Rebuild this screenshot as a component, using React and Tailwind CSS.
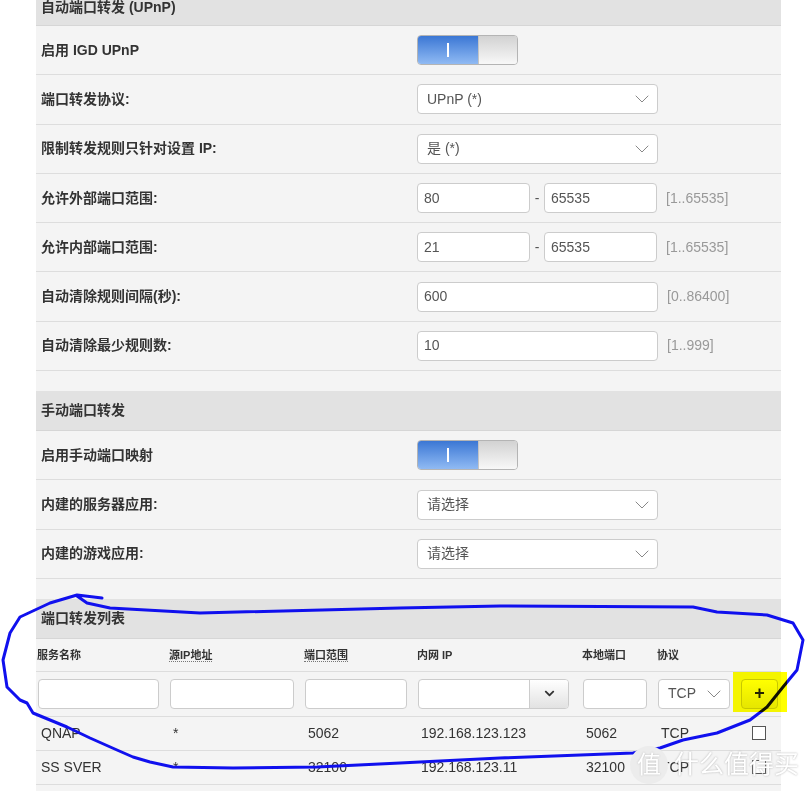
import React from 'react';
import { ChevronDown } from 'lucide-react';
import { FaChevronDown } from 'react-icons/fa';

const font = { fontFamily: '"Liberation Sans", "Noto Sans CJK SC", sans-serif' };

function Toggle() {
  return (
    <div className="flex h-[30px] w-[101px] overflow-hidden rounded-[4px] border border-[#b4b4b4]">
      <div className="flex w-[60px] items-center justify-center bg-gradient-to-b from-[#3b77d4] to-[#90baf3]">
        <div className="h-[14px] w-[2px] bg-white" />
      </div>
      <div className="flex-1 border-l border-[#c4c4c4] bg-gradient-to-b from-[#d2d2d2] to-[#f8f8f8]" />
    </div>
  );
}

function Select({ value, w = 'w-[241px]' }) {
  return (
    <div className={`flex h-[30px] ${w} items-center justify-between rounded-[4px] border border-[#cccccc] bg-white pl-[9px] pr-[3px] text-[14px] text-[#555]`}>
      <span>{value}</span>
      <ChevronDown size={24} strokeWidth={1} color="#888" />
    </div>
  );
}

function Input({ value, w = 'w-[241px]' }) {
  return (
    <div className={`flex h-[30px] ${w} items-center rounded-[4px] border border-[#cccccc] bg-white px-[6px] text-[14px] text-[#555]`}>
      {value}
    </div>
  );
}

function Row({ label, children }) {
  return (
    <div className="flex h-[49.3px] items-center border-b border-[#dddddd]">
      <div className="w-[381px] pl-[5px] text-[14px] font-bold text-[#333]">{label}</div>
      <div className="flex items-center">{children}</div>
    </div>
  );
}

function Header({ children, h = 'h-[40px]' }) {
  return (
    <div className={`flex ${h} items-center border-b border-[#d6d6d6] bg-[#e2e2e2] pl-[5px] text-[14px] font-bold text-[#333]`}>
      {children}
    </div>
  );
}

function Range({ a, b, hint }) {
  return (
    <>
      <Input value={a} w="w-[113px]" />
      <span className="w-[14px] text-center text-[14px] text-[#555]">-</span>
      <Input value={b} w="w-[113px]" />
      <span className="ml-[9px] text-[14px] text-[#999]">{hint}</span>
    </>
  );
}

const cols = 'grid grid-cols-[132px_135px_113px_165px_75px_83px_42px]';

export default function App() {
  const rows = [
    ['QNAP', '*', '5062', '192.168.123.123', '5062', 'TCP'],
    ['SS SVER', '*', '32100', '192.168.123.11', '32100', 'TCP'],
  ];
  return (
    <div className="relative h-[791px] w-[806px] overflow-hidden bg-white" style={font}>
      <div className="ml-[36px] -mt-[10px] w-[745px] bg-[#f4f4f4]">
        <Header h="h-[36px]">自动端口转发 (UPnP)</Header>
        <Row label="启用 IGD UPnP"><Toggle /></Row>
        <Row label="端口转发协议:"><Select value="UPnP (*)" /></Row>
        <Row label="限制转发规则只针对设置 IP:"><Select value="是 (*)" /></Row>
        <Row label="允许外部端口范围:"><Range a="80" b="65535" hint="[1..65535]" /></Row>
        <Row label="允许内部端口范围:"><Range a="21" b="65535" hint="[1..65535]" /></Row>
        <Row label="自动清除规则间隔(秒):">
          <Input value="600" />
          <span className="ml-[9px] text-[14px] text-[#999]">[0..86400]</span>
        </Row>
        <Row label="自动清除最少规则数:">
          <Input value="10" />
          <span className="ml-[9px] text-[14px] text-[#999]">[1..999]</span>
        </Row>
        <div className="h-[20px]" />

        <Header>手动端口转发</Header>
        <Row label="启用手动端口映射"><Toggle /></Row>
        <Row label="内建的服务器应用:"><Select value="请选择" /></Row>
        <Row label="内建的游戏应用:"><Select value="请选择" /></Row>
        <div className="h-[20px]" />

        <Header>端口转发列表</Header>
        <div className={`${cols} h-[33px] items-center border-b border-[#dddddd] text-[11px] font-bold text-[#333]`}>
          <div className="pl-px">服务名称</div>
          <div className="pl-px"><span className="border-b border-dotted border-[#777]">源IP地址</span></div>
          <div className="pl-px"><span className="border-b border-dotted border-[#777]">端口范围</span></div>
          <div className="pl-px">内网 IP</div>
          <div className="pl-px">本地端口</div>
          <div className="pl-px">协议</div>
          <div />
        </div>
        <div className={`${cols} h-[45px] items-center border-b border-[#dddddd]`}>
          <div className="pl-[2px]"><Input value="" w="w-[121px]" /></div>
          <div className="pl-[2px]"><Input value="" w="w-[124px]" /></div>
          <div className="pl-[2px]"><Input value="" w="w-[102px]" /></div>
          <div className="pl-[2px]">
            <div className="flex h-[30px] w-[151px] overflow-hidden rounded-[4px] border border-[#cccccc] bg-white">
              <div className="flex-1" />
              <div className="flex w-[39px] items-center justify-center border-l border-[#cccccc] bg-gradient-to-b from-[#ffffff] to-[#e2e2e2]">
                <FaChevronDown size={11} color="#333" />
              </div>
            </div>
          </div>
          <div className="pl-[2px]"><Input value="" w="w-[64px]" /></div>
          <div className="pl-[2px]"><Select value="TCP" w="w-[72px]" /></div>
          <div className="pl-[2px]">
            <div className="flex h-[30px] w-[37px] items-center justify-center rounded-[4px] border border-[#c8c8c8] bg-gradient-to-b from-[#ffffff] to-[#e6e6e6] text-[18px] font-bold text-[#222]">
              +
            </div>
          </div>
        </div>
        {rows.map((r) => (
          <div key={r[0]} className={`${cols} h-[34px] items-center border-b border-[#dddddd] text-[14px] text-[#333]`}>
            {r.map((c, i) => (
              <div key={i} className="pl-[5px]">{c}</div>
            ))}
            <div className="pl-[13px]">
              <div className="h-[14px] w-[14px] border border-[#555] bg-white" />
            </div>
          </div>
        ))}
        <div className="h-[20px]" />
      </div>

      <svg className="pointer-events-none absolute left-0 top-0" width="806" height="791">
        <polyline
          fill="none"
          stroke="#1010ee"
          strokeWidth="3"
          strokeLinejoin="round"
          strokeLinecap="round"
          points="102,598 77,595 50,603 20,617 10,633 3,660 7,687 20,700 27,703 33,713 67,727 90,738 117,750 133,757 150,762 173,767 233,768 317,767 400,763 500,758 633,753 660,748 683,740 717,733 750,720 767,707 783,687 797,670 803,640 793,623 767,615 717,612 693,607 500,606 400,608 200,613 110,608 87,603 77,596"
        />
      </svg>

      <div className="pointer-events-none absolute left-[733px] top-[672px] h-[40px] w-[54px] bg-[#ffff00] mix-blend-multiply" />

      <div className="pointer-events-none absolute left-[630px] top-[746px] flex items-center gap-[6px]">
        <div className="flex h-[38px] w-[38px] items-center justify-center rounded-full bg-[#ececec] text-[24px] text-white [text-shadow:0_0_2px_#bbb]">
          值
        </div>
        <span className="text-[25px] text-white [text-shadow:0_0_2px_#aaa]">什么值得买</span>
      </div>
    </div>
  );
}
